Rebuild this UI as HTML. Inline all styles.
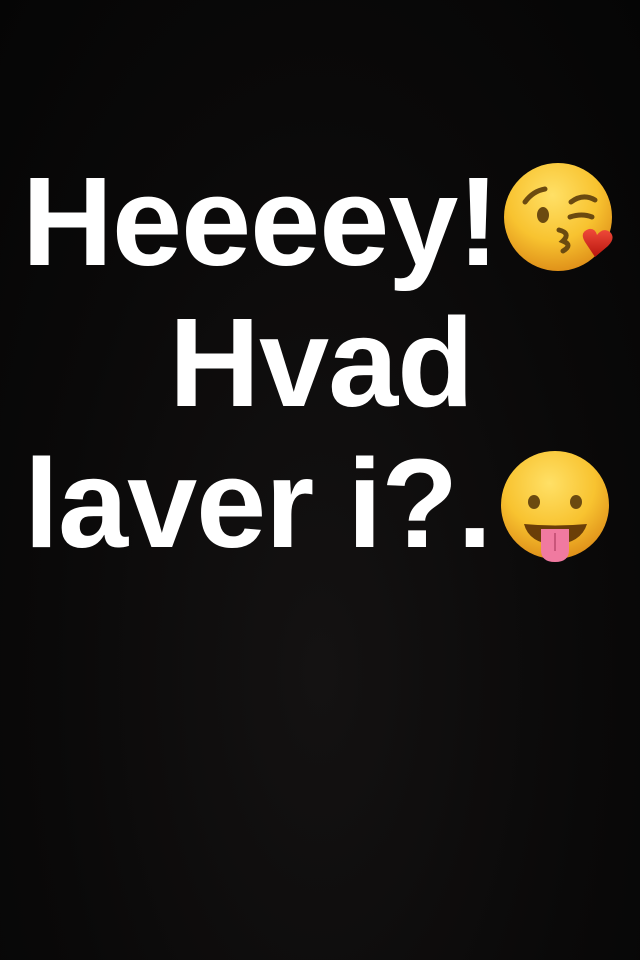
<!DOCTYPE html>
<html><head><meta charset="utf-8"><style>
html,body{margin:0;padding:0}
body{width:640px;height:960px;background:radial-gradient(ellipse at 50% 70%,#141212 0%,#0a0909 60%,#050505 100%);position:relative;overflow:hidden;font-family:"Liberation Sans",sans-serif;font-weight:bold;color:#fff}
.t{position:absolute;font-size:126px;line-height:126px;white-space:nowrap;letter-spacing:-1px}
svg{position:absolute}
</style></head><body>
<div class="t" style="left:22px;top:159px">Heeeey!</div>
<div class="t" style="left:169px;top:300px">Hvad</div>
<div class="t" style="left:24px;top:441px">laver i?.</div>

<svg style="left:495px;top:155px" width="130" height="125" viewBox="0 0 130 125">
<defs><radialGradient id="g1" cx="45%" cy="30%" r="70%"><stop offset="0" stop-color="#ffe066"/><stop offset="0.6" stop-color="#f8c330"/><stop offset="1" stop-color="#e0921a"/></radialGradient>
<linearGradient id="h" x1="0" y1="0" x2="0" y2="1"><stop offset="0" stop-color="#f04a3a"/><stop offset="1" stop-color="#b8160e"/></linearGradient></defs>
<circle cx="63" cy="62" r="54" fill="url(#g1)"/>
<path d="M30 47 Q38 36 50 34" stroke="#6b4a10" stroke-width="5" fill="none" stroke-linecap="round"/>
<path d="M76 47 Q88 38 100 45" stroke="#6b4a10" stroke-width="5" fill="none" stroke-linecap="round"/>
<ellipse cx="48" cy="60" rx="6" ry="8" fill="#6b4a10"/>
<path d="M75 62 Q87 58 97 62" stroke="#6b4a10" stroke-width="5" fill="none" stroke-linecap="round"/>
<path d="M64 75 Q76 78 68 86 Q78 90 68 96" stroke="#6b4a10" stroke-width="5" fill="none" stroke-linecap="round"/>
<path d="M100 102 L90 87 Q84 77 94 74 Q100 73 102 80 Q108 72 115 77 Q121 83 113 91 Z" fill="url(#h)"/>
</svg>

<svg style="left:495px;top:445px" width="120" height="120" viewBox="0 0 120 120">
<defs><radialGradient id="g2" cx="45%" cy="30%" r="70%"><stop offset="0" stop-color="#ffe066"/><stop offset="0.6" stop-color="#f8c330"/><stop offset="1" stop-color="#e0921a"/></radialGradient></defs>
<circle cx="60" cy="60" r="54" fill="url(#g2)"/>
<ellipse cx="39" cy="57" rx="6" ry="7" fill="#6b4a10"/>
<ellipse cx="81" cy="57" rx="6" ry="7" fill="#6b4a10"/>
<path d="M29 79 Q60 82 92 79 Q86 98 60 100 Q34 98 29 79 Z" fill="#6b3e08"/>
<path d="M46 84 L74 84 L74 105 Q74 117 60 117 Q46 117 46 105 Z" fill="#f07aa0"/>
<line x1="60" y1="88" x2="60" y2="106" stroke="#c9557a" stroke-width="2"/>
</svg>
</body></html>
